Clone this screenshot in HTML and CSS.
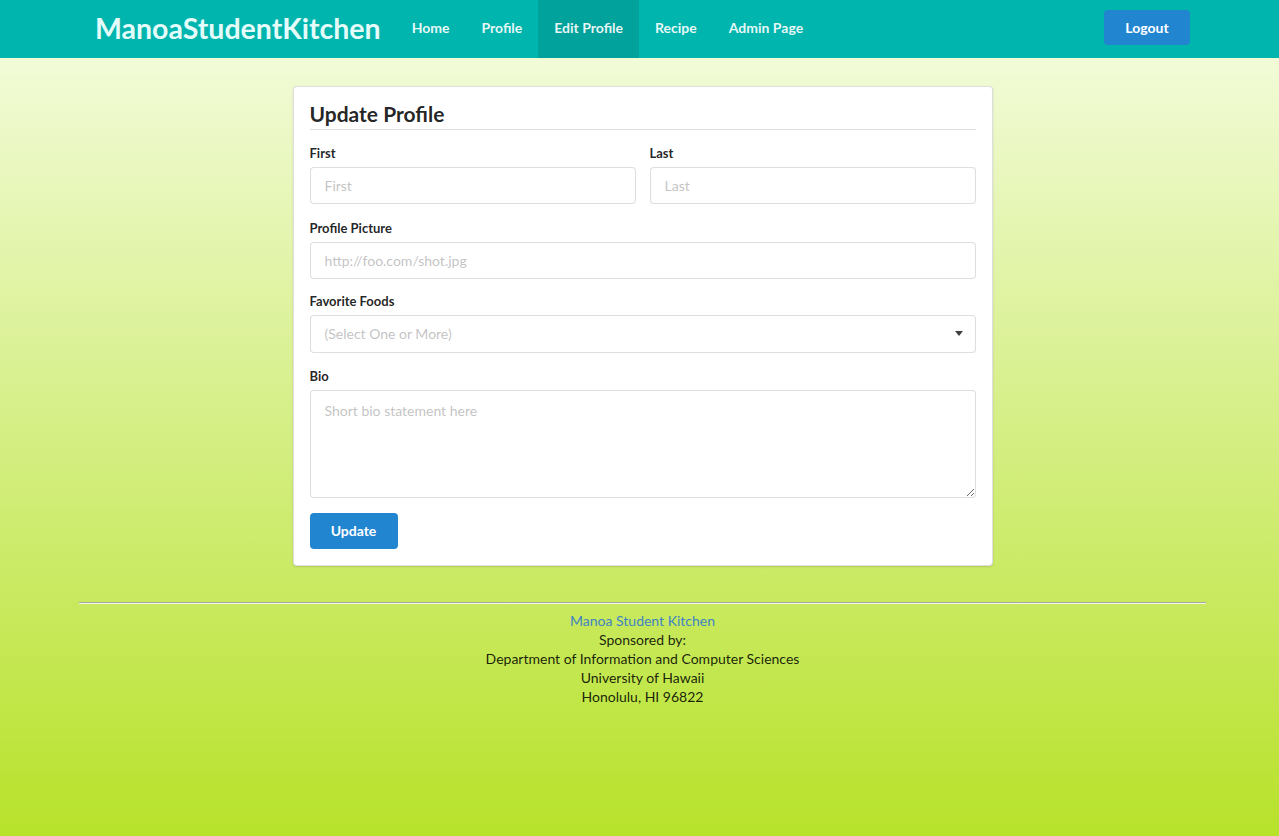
FILE: index.html
```html
<!DOCTYPE html>
<html lang="en">
<head>
<meta charset="utf-8">
<title>Manoa Student Kitchen</title>
<link rel="stylesheet" href="styles.css">
</head>
<body>
<nav class="navbar">
  <div class="container nav-inner">
    <a class="item logo" href="#">ManoaStudentKitchen</a>
    <a class="item" href="#">Home</a>
    <a class="item" href="#">Profile</a>
    <a class="item active" href="#">Edit Profile</a>
    <a class="item" href="#">Recipe</a>
    <a class="item" href="#">Admin Page</a>
    <div class="item right">
      <button class="btn btn-blue logout" type="button">Logout</button>
    </div>
  </div>
</nav>

<main class="page">
  <form class="card">
    <h2 class="dividing-header">Update Profile</h2>
    <div class="two-fields">
      <div class="field">
        <label>First</label>
        <input type="text" placeholder="First">
      </div>
      <div class="field">
        <label>Last</label>
        <input type="text" placeholder="Last">
      </div>
    </div>
    <div class="field">
      <label>Profile Picture</label>
      <input type="text" placeholder="http://foo.com/shot.jpg">
    </div>
    <div class="field">
      <label>Favorite Foods</label>
      <div class="dropdown">
        <span class="dd-text">(Select One or More)</span>
        <span class="dd-caret"></span>
      </div>
    </div>
    <div class="field">
      <label>Bio</label>
      <textarea placeholder="Short bio statement here"></textarea>
    </div>
    <button class="btn btn-blue update" type="button">Update</button>
  </form>

  <footer class="footer container">
    <hr class="footer-rule">
    <div class="footer-text">
      <a href="#" class="footer-link">Manoa Student Kitchen</a><br>
      Sponsored by:<br>
      Department of Information and Computer Sciences<br>
      University of Hawaii<br>
      Honolulu, HI 96822
    </div>
  </footer>
</main>
</body>
</html>
```

FILE: styles.css
```css
* { box-sizing: border-box; }

html, body {
  margin: 0;
  padding: 0;
}

body {
  min-height: 836px;
  font-family: Lato, "Helvetica Neue", Arial, sans-serif;
  font-size: 14px;
  line-height: 1.4285em;
  color: rgba(0, 0, 0, 0.87);
  background: linear-gradient(to bottom, #f6fde4 0%, #d6ef87 50%, #b7e22a 100%);
}

.container {
  width: 1127px;
  margin: 0 auto;
}

/* ---------- navbar ---------- */
.navbar {
  background: #00b5ad;
  height: 58px;
  padding-left: 6px;
}

.nav-inner {
  display: flex;
  align-items: stretch;
  height: 58px;
}

.item {
  display: flex;
  align-items: center;
  padding: 0 16px 2px;
  color: rgba(255, 255, 255, 0.92);
  font-weight: 700;
  font-size: 14px;
  text-decoration: none;
}

.item.logo {
  font-size: 28.5px;
  color: #e4fcfa;
  padding-right: 15px;
}

.item.active {
  background: rgba(0, 0, 0, 0.1);
}

.item.right {
  margin-left: auto;
  padding-bottom: 3px;
}

/* ---------- buttons ---------- */
.btn {
  font-family: Lato, "Helvetica Neue", Arial, sans-serif;
  font-weight: 700;
  font-size: 14px;
  line-height: 1em;
  border: none;
  border-radius: 4px;
  color: #fff;
  cursor: pointer;
}

.btn-blue { background: #2185d0; }

.logout {
  padding: 11px 21px 10px;
  width: 86px;
}

.update {
  padding: 11px 21px;
  width: 88px;
  margin-top: 1px;
}

/* ---------- card ---------- */
.page {
  padding-top: 28px;
  padding-left: 6px;
}

.card {
  width: 700px;
  margin: 0 auto;
  background: #fff;
  border: 1px solid rgba(34, 36, 38, 0.15);
  border-radius: 4px;
  box-shadow: 0 1px 2px 0 rgba(34, 36, 38, 0.15);
  padding: 16px;
}

.dividing-header {
  margin: 0 0 14px;
  font-size: 21px;
  line-height: 22px;
  font-weight: 700;
  color: rgba(0, 0, 0, 0.87);
  padding-bottom: 4px;
  border-bottom: 1px solid rgba(34, 36, 38, 0.15);
}

.two-fields {
  display: grid;
  grid-template-columns: 1fr 1fr;
  column-gap: 14px;
}

.field {
  margin-bottom: 14.5px;
}

.field label {
  display: block;
  font-size: 13px;
  font-weight: 700;
  line-height: 17px;
  margin: 1px 0 5px;
  color: rgba(0, 0, 0, 0.87);
}

input, textarea {
  display: block;
  width: 100%;
  font-family: Lato, "Helvetica Neue", Arial, sans-serif;
  font-size: 14px;
  color: rgba(0, 0, 0, 0.87);
  border: 1px solid rgba(34, 36, 38, 0.15);
  border-radius: 4px;
  background: #fff;
  outline: none;
}

input {
  height: 37px;
  padding: 0 14px;
}

textarea {
  height: 108px;
  padding: 11px 14px;
  line-height: 1.2857em;
  resize: vertical;
}

input::placeholder,
textarea::placeholder {
  color: rgba(191, 191, 191, 0.95);
}

.dropdown {
  position: relative;
  display: flex;
  align-items: center;
  height: 38px;
  padding: 0 14px;
  border: 1px solid rgba(34, 36, 38, 0.15);
  border-radius: 4px;
  background: #fff;
}

.dd-text {
  color: rgba(191, 191, 191, 0.95);
}

.dd-caret {
  position: absolute;
  right: 12px;
  top: 15px;
  width: 0;
  height: 0;
  border-left: 4px solid transparent;
  border-right: 4px solid transparent;
  border-top: 5px solid rgba(0, 0, 0, 0.75);
}

/* ---------- footer ---------- */
.footer {
  padding-top: 36px;
  text-align: center;
}

.footer-rule {
  margin: 0;
  border: 0;
  border-top: 1px solid #a7a7a7;
  border-bottom: 1px solid #f2f7e4;
  height: 0;
}

.footer-text {
  padding-top: 7px;
  line-height: 19px;
  color: rgba(0, 0, 0, 0.87);
}

.footer-link {
  color: #4183c4;
  text-decoration: none;
}
```
